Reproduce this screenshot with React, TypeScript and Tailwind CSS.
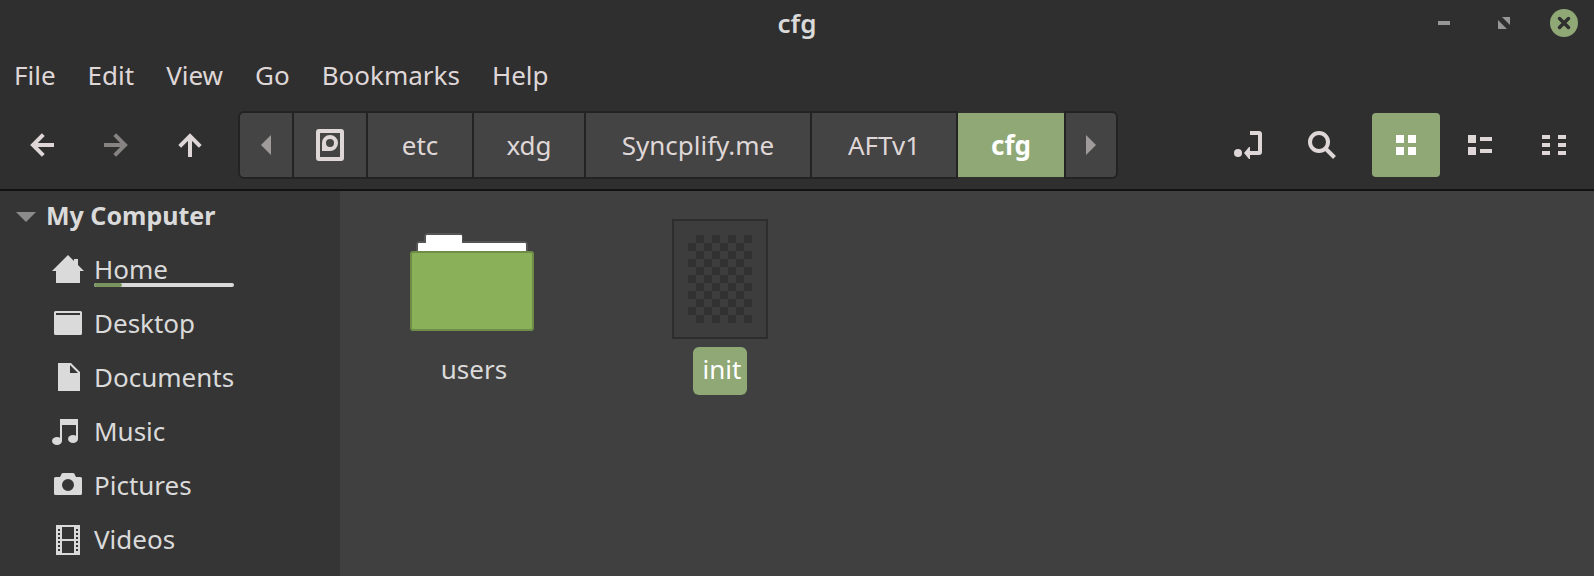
import { useState } from 'react';
import type { ReactNode } from 'react';

const menuItems = ['File', 'Edit', 'View', 'Go', 'Bookmarks', 'Help'];

const crumbs = [
  { label: 'etc', width: 'w-[106px]' },
  { label: 'xdg', width: 'w-[112px]' },
  { label: 'Syncplify.me', width: 'w-[226px]' },
  { label: 'AFTv1', width: 'w-[146px]' },
];

const HomeIcon = () => (
  <svg viewBox="0 0 32 32" className="size-8 shrink-0" fill="currentColor" aria-hidden="true">
    <path d="M16 1 0 17h4v12h24V17h4l-6-6V5h-4v2z" />
  </svg>
);

const DesktopIcon = () => (
  <svg viewBox="0 0 32 32" className="size-8 shrink-0" fill="currentColor" aria-hidden="true">
    <path fillRule="evenodd" d="M3.500 3h25Q30 3 30 4.500v21q0 1.500-1.500 1.500h-25Q2 27 2 25.500v-21Q2 3 3.500 3zM4 5v2h24V5z" />
  </svg>
);

const DocumentIcon = () => (
  <svg viewBox="0 0 32 32" className="size-8 shrink-0" fill="currentColor" aria-hidden="true">
    <path fillRule="evenodd" d="M6 1h13l9 9v19H6zM18 3v8h8z" />
  </svg>
);

const MusicIcon = () => (
  <svg viewBox="0 0 32 32" className="size-8 shrink-0" fill="currentColor" aria-hidden="true">
    <path d="M8 3h18v20h-2V9H10v16H8z" />
    <ellipse cx="5" cy="25" rx="5" ry="4" />
    <ellipse cx="21" cy="23" rx="5" ry="4" />
  </svg>
);

const PicturesIcon = () => (
  <svg viewBox="0 0 32 32" className="size-8 shrink-0" fill="currentColor" aria-hidden="true">
    <path fillRule="evenodd" d="M11 3h10q1.500 0 2 2l1 2h4.500Q30 7 30 8.500v15q0 1.500-1.500 1.500h-25Q2 25 2 23.500v-15Q2 7 3.500 7H8l1-2q.5-2 2-2zm5 6a6 6 0 1 0 0 12 6 6 0 0 0 0-12z" />
  </svg>
);

const VideosIcon = () => (
  <svg viewBox="0 0 32 32" className="size-8 shrink-0" fill="currentColor" aria-hidden="true">
    <path
      fillRule="evenodd"
      d="M4 1h24v30H4zM10 3v12h12V3zM10 17v12h12V17zM6 5v2h2V5zM6 9v2h2V9zM6 13v2h2v-2zM6 17v2h2v-2zM6 21v2h2v-2zM6 25v2h2v-2zM24 5v2h2V5zM24 9v2h2V9zM24 13v2h2v-2zM24 17v2h2v-2zM24 21v2h2v-2zM24 25v2h2v-2z"
    />
  </svg>
);

const places: { label: string; icon: ReactNode; usage?: number }[] = [
  { label: 'Home', icon: <HomeIcon />, usage: 20 },
  { label: 'Desktop', icon: <DesktopIcon /> },
  { label: 'Documents', icon: <DocumentIcon /> },
  { label: 'Music', icon: <MusicIcon /> },
  { label: 'Pictures', icon: <PicturesIcon /> },
  { label: 'Videos', icon: <VideosIcon /> },
];

const views = [
  { id: 'icons', label: 'Icon view', path: 'M6 6h8v8H6zM18 6h8v8h-8zM6 18h8v8H6zM18 18h8v8h-8z' },
  { id: 'list', label: 'List view', path: 'M4 6h8v8H4zM16 8h12v4H16zM4 18h8v8H4zM16 20h12v4H16z' },
  { id: 'compact', label: 'Compact view', path: 'M4 6h8v4H4zM20 6h8v4h-8zM4 14h8v4H4zM20 14h8v4h-8zM4 22h8v4H4zM20 22h8v4h-8z' },
];

const FolderIcon = () => (
  <svg viewBox="0 0 128 128" className="size-32" aria-hidden="true">
    <path d="M8 40V30q0-4 4-4h4v-4q0-4 4-4h31q4 0 4 4v4h61q4 0 4 4v10z" fill="#555555" />
    <path d="M10 40V29q0-1 1-1h7v-7q0-1 1-1h34q1 0 1 1v7h63q1 0 1 1v11z" fill="#ffffff" />
    <rect x="2" y="36" width="124" height="80" rx="3" fill="#6e8d47" />
    <rect x="4" y="38" width="120" height="76" rx="1" fill="#8ab059" />
  </svg>
);

const FileIcon = () => {
  const cells = [];
  for (let row = 0; row < 11; row++) {
    for (let col = row % 2 === 0 ? 1 : 0; col < 8; col += 2) {
      cells.push(<rect key={`${row}-${col}`} x={32 + col * 8} y={20 + row * 8} width="8" height="8" fill="#313131" />);
    }
  }
  return (
    <svg viewBox="0 0 128 128" className="size-32" shapeRendering="crispEdges" aria-hidden="true">
      <rect x="17" y="5" width="94" height="118" fill="#3d3d3d" stroke="#2d2d2d" strokeWidth="2" />
      {cells}
    </svg>
  );
};

const files = [
  { name: 'users', icon: <FolderIcon /> },
  { name: 'init', icon: <FileIcon /> },
];

const TitleBar = () => (
  <header className="grid h-[46px] grid-cols-[1fr_auto_1fr] items-center">
    <h1 className="col-start-2 font-semibold text-[#dadada]">cfg</h1>
    <div className="flex items-center justify-end gap-8 pr-4">
      <button aria-label="Minimize" className="size-7 text-[#979797]">
        <svg viewBox="0 0 28 28" fill="currentColor"><path d="M8 12h12v4H8z" /></svg>
      </button>
      <button aria-label="Restore" className="size-7 text-[#979797]">
        <svg viewBox="0 0 28 28" fill="currentColor"><path d="M12 8h8v8zM8 11l9 9H8z" /></svg>
      </button>
      <button aria-label="Close" className="size-7 rounded-full bg-[#8fa876] text-[#2f2f2f]">
        <svg viewBox="0 0 28 28" fill="none" stroke="currentColor" strokeWidth="3.500" strokeLinecap="round">
          <path d="m9.500 9.500 9 9m0-9-9 9" />
        </svg>
      </button>
    </div>
  </header>
);

const Toolbar = () => {
  const [view, setView] = useState('icons');

  return (
    <div className="flex items-center pt-1 pr-[6px] pb-[10px] pl-[6px] text-[#dfd7d7]">
      <div className="flex gap-[2px]">
        <button aria-label="Back" className="flex h-16 w-[72px] items-center justify-center">
          <svg viewBox="0 0 32 32" className="size-8" fill="none" stroke="currentColor" strokeWidth="4">
            <path d="M28 16H8M17.300 5.700 7 16l10.300 10.300" />
          </svg>
        </button>
        <button aria-label="Forward" disabled className="flex h-16 w-[72px] items-center justify-center text-[#878383]">
          <svg viewBox="0 0 32 32" className="size-8" fill="none" stroke="currentColor" strokeWidth="4">
            <path d="M4 16h20M14.700 5.700 25 16 14.700 26.300" />
          </svg>
        </button>
        <button aria-label="Up" className="flex h-16 w-[72px] items-center justify-center">
          <svg viewBox="0 0 32 32" className="size-8" fill="none" stroke="currentColor" strokeWidth="4">
            <path d="M16 28V8M5.700 17.300 16 7l10.300 10.300" />
          </svg>
        </button>
      </div>

      {/* Path bar */}
      <nav aria-label="Path" className="ml-3 flex h-[68px]">
        <button aria-label="Scroll left" className="flex w-14 items-center justify-center rounded-l-[6px] border-2 border-[#232323] bg-[#444444] text-[#9f9b9b]">
          <svg viewBox="0 0 10 20" className="h-5 w-[10px]" fill="currentColor"><path d="M10 0v20L0 10z" /></svg>
        </button>
        <button aria-label="File system" className="flex w-[74px] items-center justify-center border-y-2 border-r-2 border-[#232323] bg-[#444444]">
          <svg viewBox="0 0 28 32" className="h-8 w-7" fill="currentColor">
            <path fillRule="evenodd" d="M3 0h22q3 0 3 3v26q0 3-3 3H3q-3 0-3-3V3q0-3 3-3zM4 4v24h20V4z" />
            <path fillRule="evenodd" d="M14 6a8 8 0 0 1 0 16H6v-8a8 8 0 0 1 8-8zm0 4a4 4 0 1 0 0 8 4 4 0 0 0 0-8z" />
          </svg>
        </button>
        {crumbs.map((crumb) => (
          <button key={crumb.label} className={`${crumb.width} border-y-2 border-r-2 border-[#232323] bg-[#444444]`}>
            {crumb.label}
          </button>
        ))}
        <button aria-current="page" className="my-[2px] w-[106px] bg-[#8fa876] font-bold text-white">cfg</button>
        <button aria-label="Scroll right" className="flex w-[54px] items-center justify-center rounded-r-[6px] border-2 border-[#232323] bg-[#444444] text-[#9f9b9b]">
          <svg viewBox="0 0 10 20" className="h-5 w-[10px]" fill="currentColor"><path d="M0 0v20l10-10z" /></svg>
        </button>
      </nav>

      <div className="ml-auto flex gap-[6px]">
        <button aria-label="Toggle location entry" className="flex h-16 w-[68px] items-center justify-center">
          <svg viewBox="0 0 32 32" className="size-8" fill="currentColor">
            <circle cx="6" cy="24" r="4" />
            <path d="M18 2h9q3 0 3 3v18q0 3-3 3h-9v4h-1l-5-6 5-6h1v4h8V6h-8z" />
          </svg>
        </button>
        <button aria-label="Search" className="flex h-16 w-[68px] items-center justify-center">
          <svg viewBox="0 0 32 32" className="size-8" fill="none" stroke="currentColor" strokeWidth="4">
            <circle cx="13" cy="13" r="9" />
            <path d="m19.500 19.500 9 9" />
          </svg>
        </button>
        <div className="ml-[10px] flex gap-[6px]">
          {views.map((item) => (
            <button
              key={item.id}
              aria-label={item.label}
              aria-pressed={view === item.id}
              onClick={() => setView(item.id)}
              className={`flex h-16 w-[68px] items-center justify-center rounded ${view === item.id ? 'bg-[#8fa876] text-white' : ''}`}
            >
              <svg viewBox="0 0 32 32" className="size-8" fill="currentColor" shapeRendering="crispEdges">
                <path d={item.path} />
              </svg>
            </button>
          ))}
        </div>
      </div>
    </div>
  );
};

const Sidebar = () => (
  <aside className="w-[340px] shrink-0 bg-[#353535] text-[#dadada]">
    <button className="flex h-[52px] w-full items-center gap-[10px] pl-4 text-left text-[25px] font-bold">
      <svg viewBox="0 0 20 10" className="h-[10px] w-5 text-[#8b8b8b]" fill="currentColor" aria-hidden="true">
        <path d="M0 0h20L10 10z" />
      </svg>
      <span className="pb-1">My Computer</span>
    </button>
    <ul>
      {places.map((place) => (
        <li key={place.label}>
          <a href="#" className="flex h-[54px] items-center gap-[10px] pl-[52px]">
            {place.icon}
            <span className="relative w-[140px] pb-[2px]">
              {place.label}
              {place.usage !== undefined && (
                <span className="absolute inset-x-0 bottom-0 h-1 overflow-hidden rounded-full bg-[#dadada]">
                  <span className="block h-full rounded-full bg-[#79945e]" style={{ width: `${place.usage}%` }} />
                </span>
              )}
            </span>
          </a>
        </li>
      ))}
    </ul>
  </aside>
);

export default function App() {
  const [selected, setSelected] = useState('init');

  return (
    <div className="flex min-h-screen flex-col overflow-hidden bg-[#2f2f2f] font-['Noto_Sans',sans-serif] text-[26px] leading-[32px]">
      <TitleBar />
      <nav aria-label="Menu" className="flex h-[61px] items-center gap-8 px-[14px] pb-1 text-[#dfd7d7]">
        {menuItems.map((item) => (
          <button key={item}>{item}</button>
        ))}
      </nav>
      <Toolbar />

      <div className="flex flex-1 border-t-2 border-[#121212]">
        <Sidebar />
        <main className="flex flex-1 flex-wrap content-start bg-[#404040] px-2 pt-6 text-[#dadada]">
          {files.map((file) => (
            <button key={file.name} onClick={() => setSelected(file.name)} className="flex w-[248px] flex-col items-center gap-1">
              {file.icon}
              <span className={`rounded-md pt-[6px] pr-[6px] pb-[10px] pl-[10px] ${selected === file.name ? 'bg-[#8fa876] text-white' : ''}`}>
                {file.name}
              </span>
            </button>
          ))}
        </main>
      </div>
    </div>
  );
}
